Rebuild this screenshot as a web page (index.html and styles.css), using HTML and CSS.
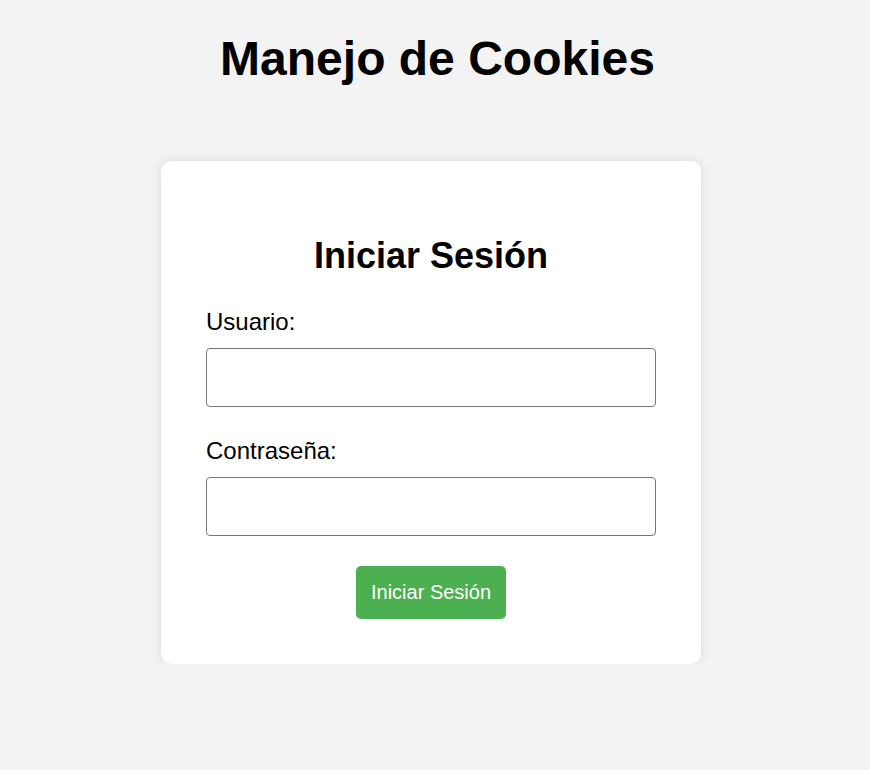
FILE: index.html
```html
<!DOCTYPE html>
<html lang="es">
<head>
<meta charset="utf-8">
<title>Manejo de Cookies</title>
<link rel="stylesheet" href="styles.css">
</head>
<body>
<h1 class="page-title">Manejo de Cookies</h1>
<div class="card">
  <h2 class="card-title">Iniciar Sesión</h2>
  <form class="form">
    <label class="label" for="usuario">Usuario:</label>
    <input class="input" id="usuario" type="text">
    <label class="label" for="pass">Contraseña:</label>
    <input class="input" id="pass" type="password">
    <div class="actions">
      <button class="btn" type="button">Iniciar Sesión</button>
    </div>
  </form>
</div>
</body>
</html>
```

FILE: styles.css
```css
html, body {
  margin: 0;
  padding: 0;
}
body {
  background: #f3f3f3;
  font-family: "Liberation Sans", Arial, sans-serif;
  color: #000;
  padding-top: 31px;
}
.page-title {
  font-size: 48px;
  font-weight: bold;
  text-align: center;
  margin: 0;
  padding-left: 5px;
  line-height: 55px;
}
.card {
  width: 540px;
  box-sizing: border-box;
  margin: 75px 0 0 calc(50% - 274px);
  background: #fff;
  border-radius: 10px;
  box-shadow: 0 0 12px rgba(0,0,0,0.1);
  padding: 45px;
}
.card-title {
  font-size: 36px;
  font-weight: bold;
  text-align: center;
  margin: 30px 0 0;
  line-height: 40px;
}
.form {
  display: flex;
  flex-direction: column;
}
.label {
  font-size: 24px;
  line-height: 27px;
  margin-top: 32px;
  margin-bottom: 13px;
}
.input + .label {
  margin-top: 30px;
}
.input {
  height: 59px;
  box-sizing: border-box;
  border: 1px solid #767676;
  border-radius: 4px;
  padding: 10px;
  font-size: 16px;
  margin: 0;
}
.actions {
  display: flex;
  justify-content: center;
  margin-top: 30px;
}
.btn {
  height: 53px;
  background: #4caf50;
  color: #fff;
  border: none;
  border-radius: 5px;
  font-family: "Liberation Sans", Arial, sans-serif;
  font-size: 20px;
  line-height: 23px;
  padding: 15px;
}
```
